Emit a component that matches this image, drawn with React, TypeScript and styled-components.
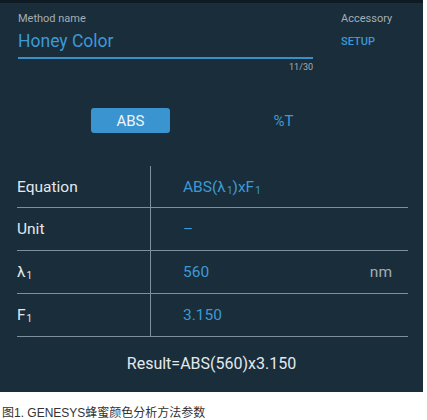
import React from 'react';
import styled, { createGlobalStyle } from 'styled-components';

const Global = createGlobalStyle`
    body {
        margin: 0;
        background: #fff;
        font-family: Roboto, 'Liberation Sans', sans-serif;
    }
`;

const Panel = styled.div`
    width: 423px;
    height: 389px;
    background-color: #1a2d3a;
    border-top: 3px solid #0f1b24;
`;

const Header = styled.div`
    display: flex;
    padding: 9px 0 0 18px;
    height: 80px;
    box-sizing: border-box;
`;

const Field = styled.div`
    width: 295px;
    display: flex;
    flex-direction: column;
`;

const Side = styled.div`
    margin-left: 28px;
    display: flex;
    flex-direction: column;
`;

const Label = styled.span`
    font-size: 11px;
    line-height: 14px;
    color: #a3aeb6;
`;

const NameValue = styled.span`
    font-size: 17.5px;
    line-height: 22px;
    margin-top: 4px;
    color: #3d99d6;
    padding-bottom: 5px;
    border-bottom: 2px solid #3a8fc9;
`;

const Counter = styled.span`
    align-self: flex-end;
    font-size: 9px;
    line-height: 12px;
    margin-top: 2px;
    color: #a3aeb6;
`;

const SetupLink = styled.span`
    margin-top: 9px;
    font-size: 11px;
    font-weight: 500;
    line-height: 14px;
    color: #3d99d6;
`;

const Toggle = styled.div`
    display: flex;
    height: 83px;
    padding: 25px 0 0 91px;
    box-sizing: border-box;
`;

const ModeButton = styled.div<{ $active?: boolean }>`
    width: 79px;
    height: 25px;
    border-radius: 3px;
    display: flex;
    align-items: center;
    justify-content: center;
    font-size: 15px;
    color: ${(p) => (p.$active ? '#eef4f8' : '#3d99d6')};
    background-color: ${(p) => (p.$active ? '#3a94cf' : 'transparent')};
    & + & {
        margin-left: 74px;
    }
`;

const Table = styled.div`
    margin: 0 15px 0 17px;
    display: grid;
    grid-template-columns: 134px 1fr;
`;

const Key = styled.div<{ $first?: boolean }>`
    height: ${(p) => (p.$first ? 41 : 42)}px;
    display: flex;
    align-items: center;
    font-size: 15.5px;
    color: #e3e9ed;
    border-right: 1px solid #7f909c;
    border-bottom: 1px solid #7f909c;
`;

const Val = styled.div`
    display: flex;
    align-items: center;
    padding: 0 16px 0 32px;
    font-size: 15.5px;
    color: #3d99d6;
    border-bottom: 1px solid #7f909c;
`;

const Unit = styled.span`
    margin-left: auto;
    color: #a3aeb6;
`;

const Sub = styled.span`
    display: inline-block;
    font-size: 10px;
    line-height: 1;
    transform: translateY(4px);
    margin-left: 1px;
`;

const Result = styled.div`
    text-align: center;
    margin-top: 17px;
    font-size: 16px;
    color: #e3e9ed;
`;

const Caption = styled.div`
    margin: 11px 0 0 2px;
    font-family: 'Liberation Sans', 'Noto Sans CJK SC', sans-serif;
    font-size: 12px;
    color: #333;
`;

const rows = [
    { key: <>Equation</>, value: <>ABS(λ<Sub>1</Sub>)xF<Sub>1</Sub></> },
    { key: <>Unit</>, value: <>–</> },
    { key: <>λ<Sub>1</Sub></>, value: <>560</>, unit: 'nm' },
    { key: <>F<Sub>1</Sub></>, value: <>3.150</> },
];

const App: React.FC = () => (
    <>
        <Global />
        <Panel>
            <Header>
                <Field>
                    <Label>Method name</Label>
                    <NameValue>Honey Color</NameValue>
                    <Counter>11/30</Counter>
                </Field>
                <Side>
                    <Label>Accessory</Label>
                    <SetupLink>SETUP</SetupLink>
                </Side>
            </Header>
            <Toggle>
                <ModeButton $active>ABS</ModeButton>
                <ModeButton>%T</ModeButton>
            </Toggle>
            <Table>
                {rows.map((r, i) => (
                    <React.Fragment key={i}>
                        <Key $first={i === 0}>{r.key}</Key>
                        <Val>
                            {r.value}
                            {r.unit && <Unit>{r.unit}</Unit>}
                        </Val>
                    </React.Fragment>
                ))}
            </Table>
            <Result>Result=ABS(560)x3.150</Result>
        </Panel>
        <Caption>图1. GENESYS蜂蜜颜色分析方法参数</Caption>
    </>
);

export default App;
